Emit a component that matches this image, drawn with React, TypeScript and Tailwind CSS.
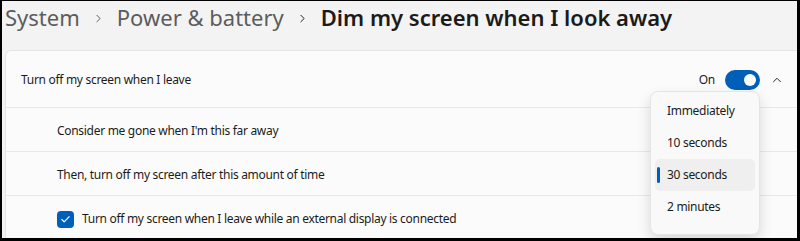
import { Check, ChevronRight, ChevronUp } from 'lucide-react';

// Windows 11 Settings — "Dim my screen when I look away" page with open time dropdown

const font = { fontFamily: '"Noto Sans", "Open Sans", sans-serif' };

const options = ['Immediately', '10 seconds', '30 seconds', '2 minutes'];
const selected = '30 seconds';

function Toggle() {
  return (
    <div className="flex h-[20px] w-[35px] items-center justify-end rounded-full bg-[#005fb8] pr-[4px]">
      <div className="h-[12px] w-[12px] rounded-full bg-white" />
    </div>
  );
}

function Dropdown() {
  return (
    <div className="absolute left-[648px] top-[90px] w-[110px] rounded-lg border border-[#e5e5e5] bg-[#f9f9f9] px-[4px] pb-[11px] pt-[3px] shadow-[0_6px_14px_rgba(0,0,0,0.14)]">
      {options.map((o) => (
        <div
          key={o}
          className={`relative flex h-[32px] items-center rounded-[5px] pl-[12px] text-[12px] tracking-[-0.3px] text-[#1b1b1b] ${
            o === selected ? 'bg-[#efefef]' : ''
          }`}
        >
          {o === selected && (
            <div className="absolute left-[2px] top-[8px] h-[16px] w-[3px] rounded-full bg-[#005fb8]" />
          )}
          {o}
        </div>
      ))}
    </div>
  );
}

export default function App() {
  return (
    <div className="h-[241px] w-[800px] bg-black pb-[3px] pl-[2px] pr-[3px] pt-px" style={font}>
      <div className="relative h-full w-full overflow-hidden bg-[#f3f3f3]">
        {/* Breadcrumb */}
        <div className="flex h-[49px] items-start pl-[3px] pt-[5px] text-[22px] leading-[22px]">
          <span className="text-[#5c5c5c]">System</span>
          <ChevronRight size={13} strokeWidth={1.8} className="mx-[12px] mt-[6px] text-[#5c5c5c]" />
          <span className="text-[#5c5c5c]">Power &amp; battery</span>
          <ChevronRight size={13} strokeWidth={1.8} className="mx-[12px] mt-[6px] text-[#1b1b1b]" />
          <span className="font-semibold text-[#1b1b1b]">Dim my screen when I look away</span>
        </div>

        {/* Card */}
        <div className="ml-[3px] rounded-tl-md border-l border-t border-[#e5e5e5] bg-[#fbfbfb] text-[12px] tracking-[-0.3px] text-[#1b1b1b]">
          <div className="flex h-[57px] items-center border-b border-[#e8e8e8] pl-[15px] pr-[13px] pt-[2px]">
            <span className="flex-1">Turn off my screen when I leave</span>
            <span className="mr-[10px]">On</span>
            <Toggle />
            <ChevronUp size={14} strokeWidth={1.6} className="ml-[10px] text-[#1b1b1b]" />
          </div>
          <div className="flex h-[44px] items-center border-b border-[#e8e8e8] pl-[51px] pt-[2px]">
            Consider me gone when I'm this far away
          </div>
          <div className="flex h-[44px] items-center border-b border-[#e8e8e8] pl-[51px] pt-[2px]">
            Then, turn off my screen after this amount of time
          </div>
          <div className="flex h-[44px] items-center pl-[51px] pt-[2px]">
            <div className="mr-[8px] flex h-[17px] w-[17px] items-center justify-center rounded-[4px] bg-[#005fb8]">
              <Check size={11} strokeWidth={2.4} className="text-white" />
            </div>
            Turn off my screen when I leave while an external display is connected
          </div>
        </div>

        <Dropdown />
      </div>
    </div>
  );
}
